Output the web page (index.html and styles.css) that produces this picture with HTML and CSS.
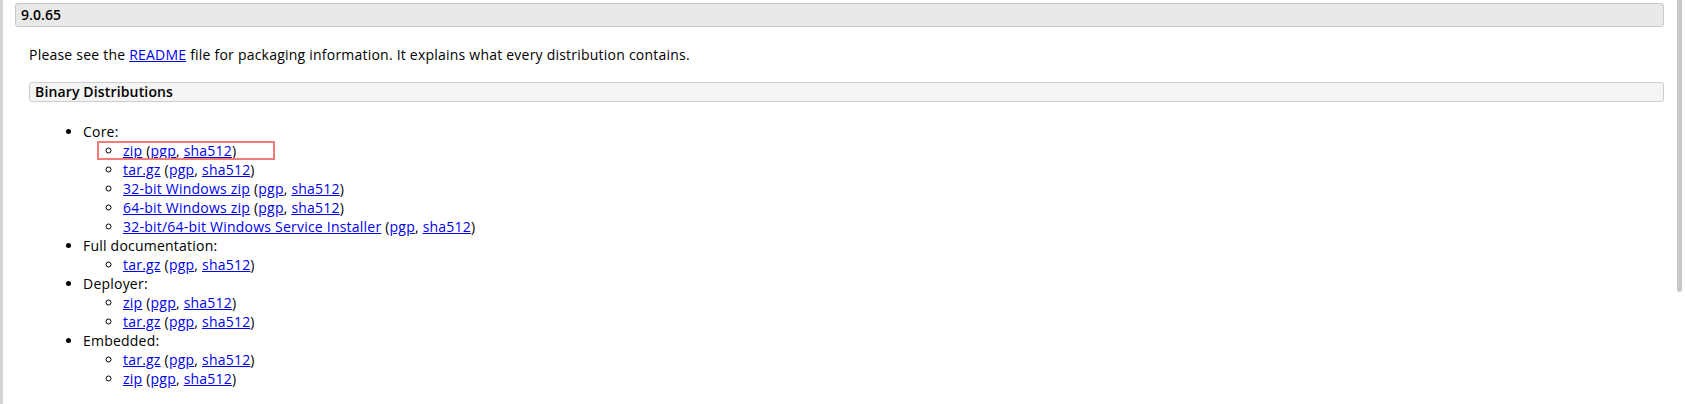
FILE: index.html
```html
<!DOCTYPE html>
<html lang="en">
<head>
<meta charset="utf-8">
<title>Tomcat 9.0.65</title>
<link rel="stylesheet" href="styles.css">
</head>
<body>
<div class="page">
  <h3 class="version">9.0.65</h3>
  <div class="release">
    <p class="intro">Please see the <a href="#">README</a> file for packaging information. It explains what every distribution contains.</p>
    <h4 class="dist-title">Binary Distributions</h4>
    <ul class="dist-list">
      <li>Core:
        <ul>
          <li class="marked"><a href="#">zip</a> (<a href="#">pgp</a>, <a href="#">sha512</a>)<span class="highlight"></span></li>
          <li><a href="#">tar.gz</a> (<a href="#">pgp</a>, <a href="#">sha512</a>)</li>
          <li><a href="#">32-bit Windows zip</a> (<a href="#">pgp</a>, <a href="#">sha512</a>)</li>
          <li><a href="#">64-bit Windows zip</a> (<a href="#">pgp</a>, <a href="#">sha512</a>)</li>
          <li><a href="#">32-bit/64-bit Windows Service Installer</a> (<a href="#">pgp</a>, <a href="#">sha512</a>)</li>
        </ul>
      </li>
      <li>Full documentation:
        <ul>
          <li><a href="#">tar.gz</a> (<a href="#">pgp</a>, <a href="#">sha512</a>)</li>
        </ul>
      </li>
      <li>Deployer:
        <ul>
          <li><a href="#">zip</a> (<a href="#">pgp</a>, <a href="#">sha512</a>)</li>
          <li><a href="#">tar.gz</a> (<a href="#">pgp</a>, <a href="#">sha512</a>)</li>
        </ul>
      </li>
      <li>Embedded:
        <ul>
          <li><a href="#">tar.gz</a> (<a href="#">pgp</a>, <a href="#">sha512</a>)</li>
          <li><a href="#">zip</a> (<a href="#">pgp</a>, <a href="#">sha512</a>)</li>
        </ul>
      </li>
    </ul>
  </div>
  <div class="scrollbar"></div>
</div>
</body>
</html>
```

FILE: styles.css
```css
html, body {
  margin: 0;
  padding: 0;
  background: #ffffff;
}

body {
  font-family: "Open Sans", "Liberation Sans", sans-serif;
  font-size: 14px;
  line-height: 19px;
  letter-spacing: 0.22px;
  color: #000000;
}

.page {
  position: relative;
  height: 404px;
  box-sizing: border-box;
  border-left: 3px solid #d4d4d4;
  padding: 3px 21px 0 12px;
  overflow: hidden;
}

.version {
  margin: 0;
  height: 22px;
  line-height: 22px;
  padding: 0 5px;
  font-size: 14px;
  font-weight: 600;
  letter-spacing: 0.05px;
  background: #e9e9e9;
  border: 1px solid #c9c9c9;
  border-radius: 3px;
}

.release {
  padding-left: 14px;
}

.intro {
  margin: 18px 0 18px 0;
}

a {
  color: #0000ee;
  text-decoration: underline;
}

.dist-title {
  margin: 0;
  height: 18px;
  line-height: 18px;
  padding: 0 5px;
  font-size: 14px;
  font-weight: 600;
  letter-spacing: 0.15px;
  background: #f4f4f4;
  border: 1px solid #cccccc;
  border-radius: 3px;
}

.dist-list {
  margin: 20px 0 0 14px;
  padding-left: 40px;
}

.dist-list ul {
  margin: 0;
  padding-left: 40px;
}

.marked {
  position: relative;
}

.highlight {
  position: absolute;
  left: -26px;
  top: 0;
  width: 174px;
  height: 15px;
  border: 2px solid #f27b7b;
  pointer-events: none;
}

.scrollbar {
  position: absolute;
  top: 0;
  left: 1674px;
  width: 5px;
  height: 292px;
  background: #c9c9c9;
  border-radius: 0 0 3px 3px;
}
```
